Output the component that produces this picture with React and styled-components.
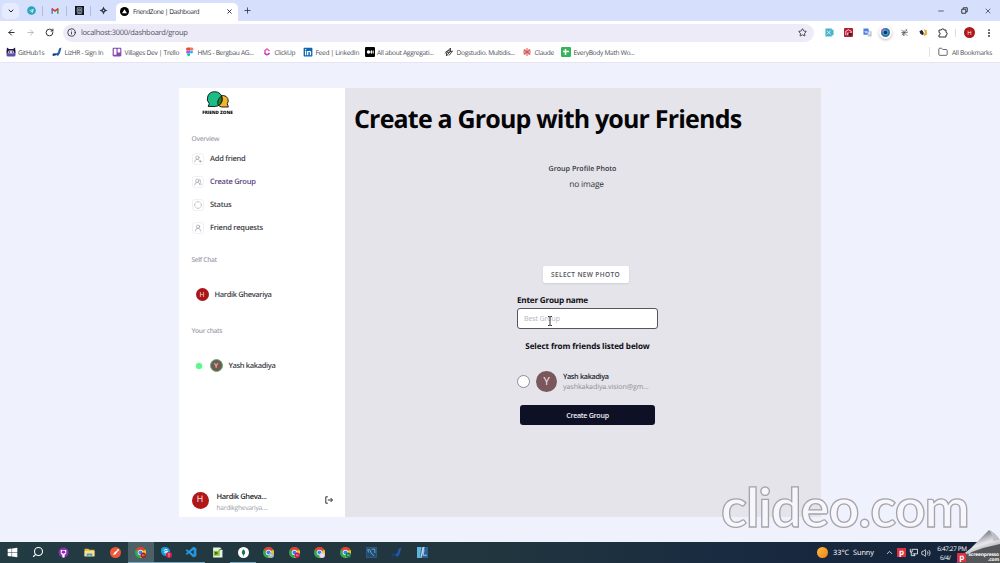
import React from 'react';
import styled, { createGlobalStyle } from 'styled-components';
import {
  ArrowLeft,
  ArrowRight,
  RotateCw,
  Info,
  Star,
  EllipsisVertical,
  Folder,
  ChevronDown,
  ChevronUp,
  Minus,
  Plus,
  X,
  UserRoundPlus,
  UsersRound,
  UserRound,
  CircleDashed,
  Search,
  Volume2,
} from 'lucide-react';
import { FaLinkedin, FaTrello, FaTelegram, FaWindows } from 'react-icons/fa';
import { VscVscode } from 'react-icons/vsc';

const bookmarks = [
  { icon: 'github1s', text: 'GitHub1s', width: 46.5 },
  { icon: 'lizhr', text: 'LizHR - Sign In', width: 60 },
  { icon: 'trello', text: 'Villages Dev | Trello', width: 73 },
  { icon: 'figma', text: 'HMS - Bergbau AG...', width: 77 },
  { icon: 'clickup', text: 'ClickUp', width: 41 },
  { icon: 'linkedin', text: 'Feed | LinkedIn', width: 61.5 },
  { icon: 'medium', text: 'All about Aggregati...', width: 79.5 },
  { icon: 'dog', text: 'Dogstudio. Multidis...', width: 78 },
  { icon: 'claude', text: 'Claude', width: 39 },
  { icon: 'sheet', text: 'EveryBody Math Wo...', width: 80 },
];

const menu = [
  { text: 'Add friend', Icon: UserRoundPlus },
  { text: 'Create Group', Icon: UsersRound, active: true },
  { text: 'Status', Icon: CircleDashed },
  { text: 'Friend requests', Icon: UserRound },
];

const tasks = [
  { icon: 'windows' },
  { icon: 'search' },
  { icon: 'github' },
  { icon: 'explorer' },
  { icon: 'postman' },
  { icon: 'chrome', badge: '#a51d1b', active: true, open: true },
  { icon: 'skype', open: true },
  { icon: 'vscode', open: true },
  { icon: 'notepad' },
  { icon: 'mongo', open: true },
  { icon: 'chrome', badge: '#9db7c4' },
  { icon: 'chrome', badge: '#c2185b' },
  { icon: 'chrome', badge: '#e3d5f2' },
  { icon: 'chrome', badge: '#0b7a4b' },
  { icon: 'workbench' },
  { icon: 'lizhr' },
  { icon: 'sketch' },
];

const Glyph = ({ name, badge }) => {
  switch (name) {
    case 'github1s':
      return (
        <Svg viewBox='0 0 20 20'>
          <path d='M2 1l4 3h8l4-3 1 7v4H1V8z' fill='#1d1850' />
          <path d='M1 11h18v5q0 3-3 3H4q-3 0-3-3z' fill='#5a4fb0' />
          <rect x='4' y='7' width='12' height='6' rx='3' fill='#f3d3c4' />
          <circle cx='7' cy='10' r='1.4' fill='#1d1850' />
          <circle cx='13' cy='10' r='1.4' fill='#1d1850' />
        </Svg>
      );
    case 'lizhr':
      return (
        <Svg viewBox='0 0 20 20'>
          <path d='M19 1l-3 11-4 6-4-3-7 2 1-4 6 0 4-2 2-8z' fill='#2458ad' />
          <path d='M1 14l6-1 3 3-8 2z' fill='#123a7d' />
        </Svg>
      );
    case 'trello':
      return <FaTrello size={10} color='#8a48b5' />;
    case 'linkedin':
      return <FaLinkedin size={10} color='#0a66b2' />;
    case 'figma':
      return (
        <Svg viewBox='0 0 20 20'>
          <path d='M5 1h5v6H5a3 3 0 0 1 0-6z' fill='#f24e1e' />
          <path d='M10 1h4a3 3 0 0 1 0 6h-4z' fill='#ff7262' />
          <path d='M5 7h5v6H5a3 3 0 0 1 0-6z' fill='#a259ff' />
          <circle cx='13' cy='10' r='3' fill='#1abcfe' />
          <path d='M5 13h5v3a3 3 0 1 1-5-3z' fill='#0acf83' />
        </Svg>
      );
    case 'clickup':
      return (
        <Svg viewBox='0 0 20 20' fill='none' strokeWidth='3'>
          <path d='M5 8l5-4 5 4' stroke='#e75aa9' />
          <path d='M5 12q5 7 10 0' stroke='#b03cd8' />
          <path d='M6 7v6' stroke='#ee5aa0' />
        </Svg>
      );
    case 'medium':
      return (
        <Svg viewBox='0 0 20 20'>
          <rect width='20' height='20' rx='2' fill='#050505' />
          <circle cx='7' cy='10' r='3.4' fill='#fff' />
          <ellipse cx='13' cy='10' rx='2' ry='3.3' fill='#fff' />
          <rect x='16' y='7' width='1.4' height='6' fill='#fff' />
        </Svg>
      );
    case 'dog':
      return (
        <Svg viewBox='0 0 20 20' fill='none' stroke='#333' strokeWidth='1.8'>
          <path d='M2 13L13 2v6L5 18v-6l12-4-7 9M3 10l9-4' />
        </Svg>
      );
    case 'claude':
      return (
        <Svg viewBox='0 0 20 20' stroke='#d3574f' strokeWidth='2'>
          <path d='M10 2v16M2 10h16M5 4l10 12M15 4L5 16M3 6l14 8M17 6L3 14' />
        </Svg>
      );
    case 'sheet':
      return (
        <Svg viewBox='0 0 20 20'>
          <rect width='20' height='20' rx='2' fill='#35b558' />
          <path d='M9 4v12M4 9h12' stroke='#fff' strokeWidth='3' />
        </Svg>
      );
    case 'windows':
      return <FaWindows size={9} color='#fff' />;
    case 'search':
      return <MirroredSearch size={12} color='#fff' strokeWidth={2.2} />;
    case 'github':
      return (
        <Svg viewBox='0 0 20 20'>
          <circle cx='10' cy='10' r='9' fill='#8b2fb0' />
          <path d='M5 5l3 1h4l3-1v6q-1 3-3 3v5H8v-5q-3 0-3-3z' fill='#fff' />
          <ellipse cx='10' cy='9.5' rx='3.4' ry='2.6' fill='#8b2fb0' />
        </Svg>
      );
    case 'explorer':
      return (
        <Svg viewBox='0 0 20 20'>
          <path d='M1 3h7l2 2h9v12H1z' fill='#e7b94a' />
          <path d='M1 7h18v10H1z' fill='#fbe08a' />
          <path d='M5 17v-5h10v5h-3v-2H8v2z' fill='#4a9ad0' />
        </Svg>
      );
    case 'postman':
      return (
        <Svg viewBox='0 0 20 20'>
          <circle cx='10' cy='10' r='10' fill='#f1583a' />
          <path d='M5 15l3-5 5-4 2 1-5 6z' fill='#fff' />
          <circle cx='14.5' cy='5.5' r='1.8' fill='#fff' />
        </Svg>
      );
    case 'skype':
      return (
        <Svg viewBox='0 0 20 20'>
          <circle cx='6' cy='6' r='6' fill='#1b9de0' />
          <circle cx='8.5' cy='8.5' r='8' fill='#18a0dc' />
          <path d='M12 5q-6-2-6 1t6 2q1 4-6 2' fill='none' stroke='#fff' strokeWidth='1.8' />
          <circle cx='14.5' cy='14.5' r='5.5' fill='#d21f4d' />
          <path d='M14.5 11.5v4M14.5 16.5v1.4' stroke='#fff' strokeWidth='1.4' />
        </Svg>
      );
    case 'vscode':
      return <VscVscode size={13} color='#2596e0' />;
    case 'notepad':
      return (
        <Svg viewBox='0 0 20 20'>
          <path d='M2 1h13l4 5v13H2z' fill='#e8f3dd' />
          <path d='M3 7h11v9H3z' fill='#8cc63f' />
          <path d='M6 14V9l3 4V9M12 6l6-2' stroke='#33521a' strokeWidth='1.6' fill='none' />
        </Svg>
      );
    case 'mongo':
      return (
        <Svg viewBox='0 0 20 20'>
          <circle cx='10' cy='10' r='10' fill='#fff' />
          <path d='M10 4q6 6 0 11q-6-5 0-11z' fill='#10754a' />
          <path d='M10 13v4' stroke='#10754a' />
        </Svg>
      );
    case 'workbench':
      return (
        <Svg viewBox='0 0 20 20' fill='none' stroke='#7fb2d6' strokeWidth='1.5'>
          <rect x='1' y='1' width='18' height='18' fill='#214b72' stroke='#315f88' />
          <path d='M3 5h4l3 7 5 4M10 4h6v7M3 5l2 5' />
        </Svg>
      );
    case 'sketch':
      return (
        <Svg viewBox='0 0 20 20'>
          <rect width='20' height='20' fill='#2a5f98' />
          <path d='M0 0h8L5 20H0z' fill='#5fb6dc' />
          <path d='M10 0h4L8 20H6z' fill='#b7d9e8' />
          <path d='M13 5l-2 10h7' fill='none' stroke='#c4d7e6' strokeWidth='1.5' />
        </Svg>
      );
    case 'chrome':
      return (
        <Svg viewBox='0 0 20 20'>
          <circle cx='10' cy='10' r='10' fill='#31a952' />
          <path d='M10 10L1.3 5A10 10 0 0 1 18.7 5z' fill='#e6402f' />
          <path d='M10 10l8.7-5A10 10 0 0 1 10 20z' fill='#fbc116' />
          <circle cx='10' cy='10' r='5' fill='#fff' />
          <circle cx='10' cy='10' r='3.8' fill='#3d83ec' />
          <circle cx='15' cy='15' r='4.8' fill={badge} />
          <path d='M13.5 13v4M16.5 13v4M13.5 15h3' stroke='#ffffff99' />
        </Svg>
      );
    default:
      return null;
  }
};

const Logo = () => (
  <LogoSvg viewBox='0 0 44 36'>
    <path
      d='M32 8a9.5 9.5 0 0 1 7 15l2 6H29a10.5 10.5 0 0 1 3-21z'
      fill='#f4b42b'
      stroke='#17201c'
      strokeWidth='1.8'
    />
    <path
      d='M16 1a13 13 0 0 1 1 27H4l2-5A13 13 0 0 1 16 1z'
      fill='#19bd85'
      stroke='#17201c'
      strokeWidth='1.8'
    />
    <path d='M28 9q4 10-5 18-5-9 5-18z' fill='#238319' stroke='#17201c' strokeWidth='1.8' />
  </LogoSvg>
);

const Browser = () => (
  <>
    <TabStrip>
      <TabSearch>
        <ChevronDown size={8} strokeWidth={3} />
      </TabSearch>
      <PinnedTab>
        <FaTelegram size={9} color='#25a9b8' />
      </PinnedTab>
      <PinnedTab>
        <Svg viewBox='0 0 20 20' $size={8} fill='none' strokeWidth='4'>
          <path d='M3 17V4' stroke='#4285f4' />
          <path d='M17 4v13' stroke='#39a852' />
          <path d='M2 4l8 6 8-6' stroke='#e23b34' />
        </Svg>
      </PinnedTab>
      <PinnedTab>
        <Svg viewBox='0 0 20 20' $size={9}>
          <rect width='20' height='20' fill='#111722' />
          <path d='M5 4h10v10H5zM5 17h10M8 7h4v4H8z' fill='none' stroke='#c5d0df' strokeWidth='1.5' />
        </Svg>
      </PinnedTab>
      <PinnedTab $last>
        <Svg viewBox='0 0 20 20' $size={9}>
          <path d='M10 1l3 6 6 3-6 3-3 6-3-6-6-3 6-3z' fill='#303846' />
          <circle cx='10' cy='10' r='1.5' fill='#d7dfff' />
        </Svg>
      </PinnedTab>
      <ActiveTab>
        <Svg viewBox='0 0 20 20' $size={9}>
          <circle cx='10' cy='10' r='10' fill='#000' />
          <path d='M10 5l5.5 9h-11z' fill='#fff' />
        </Svg>
        <TabTitle>FriendZone | Dashboard</TabTitle>
        <X size={7} strokeWidth={3} />
      </ActiveTab>
      <Plus size={9} strokeWidth={2} />
      <WindowButtons>
        <Minus size={8} />
        <Svg viewBox='0 0 14 14' $size={7} fill='none' stroke='#24252b' strokeWidth='1.8'>
          <path d='M1.5 4.5h8v8h-8zM4.5 4V1.5h8v8H10' />
        </Svg>
        <X size={8} />
      </WindowButtons>
    </TabStrip>
    <Toolbar>
      <NavButtons>
        <ArrowLeft size={9} strokeWidth={2.5} />
        <ArrowRight size={9} color='#a8a8ae' />
        <RotateCw size={9} strokeWidth={2.5} />
      </NavButtons>
      <AddressBar>
        <Info size={9} strokeWidth={2.2} />
        <Url>localhost:3000/dashboard/group</Url>
        <Star size={9} strokeWidth={2.2} />
      </AddressBar>
      <Extensions>
        <Svg viewBox='0 0 20 20' $size={9}>
          <path d='M1 1h14v3h4v12h-4v3H1z' fill='#45b4cc' />
          <path d='M4 14l9-8M4 6l9 8' stroke='#d8f2f7' strokeWidth='2' />
        </Svg>
        <Svg viewBox='0 0 20 20' $size={9}>
          <rect width='20' height='20' rx='2' fill='#b61d32' />
          <path d='M4 16V7q6-6 12 0v4H8v5' stroke='#f5dce0' strokeWidth='2' fill='none' />
          <path d='M10 9l9 5-4 1-2 4z' fill='#301016' />
        </Svg>
        <Svg viewBox='0 0 20 20' $size={9}>
          <path d='M1 1h11l3 14H1z' fill='#4c80e6' />
          <path d='M9 7h10v12h-8z' fill='#b9c2d4' />
          <path d='M4 8h5M4 8q1 4 5 2M12 11h5M15 10q0 4-3 6' stroke='#fff' strokeWidth='1.5' fill='none' />
        </Svg>
        <Lens>
          <Svg viewBox='0 0 20 20' $size={9}>
            <circle cx='10' cy='10' r='10' fill='#3b6fa8' />
            <path d='M10 0A10 10 0 0 0 0 10h7z' fill='#a06bb5' />
            <circle cx='10' cy='10' r='6' fill='#25b7d3' />
            <circle cx='10' cy='10' r='4' fill='#132f5a' />
          </Svg>
        </Lens>
        <Svg viewBox='0 0 20 20' $size={9} stroke='#4d4d55' strokeWidth='1.5' fill='none'>
          <path d='M3 4l13 13M15 4L4 16M9 5v12M3 10h14M13 2l3 6M6 12l3 6' />
        </Svg>
        <Svg viewBox='0 0 20 20' $size={9}>
          <path d='M1 7l6-3 4 7-3 5-5-3z' fill='#1e2a4c' />
          <path d='M11 3l6 2 1 9-6 4-3-3 4-5z' fill='#eda429' />
          <path d='M8 4l5 8' stroke='#fff' strokeWidth='2' />
        </Svg>
        <Svg viewBox='0 0 20 20' $size={10} fill='none' stroke='#303138' strokeWidth='2'>
          <path d='M2 4h5a2.5 2.5 0 0 1 5 0h4v5a2.5 2.5 0 0 1 0 5v4H2v-4a2.5 2.5 0 0 0 0-5z' />
        </Svg>
      </Extensions>
      <Separator />
      <Profile>H</Profile>
      <EllipsisVertical size={10} strokeWidth={2.5} />
    </Toolbar>
    <BookmarkBar>
      {bookmarks.map((item) => (
        <Bookmark key={item.text} $width={item.width}>
          <Glyph name={item.icon} />
          {item.text}
        </Bookmark>
      ))}
      <AllBookmarks>
        <Folder size={10} />
        All Bookmarks
      </AllBookmarks>
    </BookmarkBar>
  </>
);

const Sidebar = () => (
  <SidebarContainer>
    <Brand>
      <Logo />
      <BrandName>FRIEND ZONE</BrandName>
    </Brand>
    <SectionTitle>Overview</SectionTitle>
    <Menu>
      {menu.map(({ text, Icon, active }) => (
        <MenuItem key={text} $active={active}>
          <MenuIcon>
            <Icon size={8} strokeWidth={1.8} />
          </MenuIcon>
          <ItemText>{text}</ItemText>
        </MenuItem>
      ))}
    </Menu>
    <SectionTitle>Self Chat</SectionTitle>
    <Chat $self>
      <Avatar $size={13} $color='#a91518'>
        H
      </Avatar>
      <ItemText>Hardik Ghevariya</ItemText>
    </Chat>
    <SectionTitle>Your chats</SectionTitle>
    <Chat>
      <OnlineDot />
      <Avatar $size={13} $color='#79574f' $ring>
        Y
      </Avatar>
      <ItemText>Yash kakadiya</ItemText>
    </Chat>
    <Account>
      <Avatar $size={17} $color='#b01719'>
        H
      </Avatar>
      <AccountText>
        <PersonName>Hardik Gheva...</PersonName>
        <PersonMail>hardikghevariya....</PersonMail>
      </AccountText>
      <Svg viewBox='0 0 20 20' $size={8} fill='none' stroke='#24242b' strokeWidth='2.4'>
        <path d='M7 2H2v16h5M7 10h11M14 5l5 5-5 5' />
      </Svg>
    </Account>
  </SidebarContainer>
);

const GroupForm = () => (
  <Main>
    <Title>Create a Group with your Friends</Title>
    <Form>
      <PhotoLabel>Group Profile Photo</PhotoLabel>
      <NoImage>no image</NoImage>
      <PhotoButton>SELECT NEW PHOTO</PhotoButton>
      <NameLabel>Enter Group name</NameLabel>
      <NameField>
        <NameInput placeholder='Best Group' />
        <Cursor viewBox='0 0 6 10' fill='none' stroke='#333'>
          <path d='M1 .5h1.5l.5.5.5-.5H5M3 1v8M1 9.5h1.5L3 9l.5.5H5' />
        </Cursor>
      </NameField>
      <FriendsLabel>Select from friends listed below</FriendsLabel>
      <Friend>
        <Radio />
        <Avatar $size={21} $color='#79575a'>
          Y
        </Avatar>
        <FriendText>
          <FriendName>Yash kakadiya</FriendName>
          <FriendMail>yashkakadiya.vision@gm...</FriendMail>
        </FriendText>
      </Friend>
      <Submit>Create Group</Submit>
    </Form>
  </Main>
);

const Taskbar = () => (
  <TaskbarContainer>
    {tasks.map((task, index) => (
      <Task key={index} $active={task.active} $open={task.open}>
        <Glyph name={task.icon} badge={task.badge} />
      </Task>
    ))}
    <Tray>
      <Sun />
      <Weather>33°C&nbsp; Sunny</Weather>
      <ChevronUp size={9} />
      <TrayBadge>p</TrayBadge>
      <Svg viewBox='0 0 20 20' $size={9} fill='none' stroke='#fff' strokeWidth='1.8'>
        <path d='M6 3h13v10H8M3 2v7h4V4M5 9v8h9M12 13v4' />
      </Svg>
      <Volume2 size={10} strokeWidth={1.8} />
      <Clock>
        <span>6:47:27 PM</span>
        <ClockDate>6/4/</ClockDate>
      </Clock>
    </Tray>
  </TaskbarContainer>
);

const App = () => (
  <Screen>
    <GlobalStyle />
    <Browser />
    <Page>
      <Card>
        <Sidebar />
        <GroupForm />
      </Card>
    </Page>
    <Taskbar />
    <Watermark>clideo.com</Watermark>
    <Corner>
      <CornerSvg viewBox='0 0 64 36'>
        <defs>
          <linearGradient id='curl' x1='0.3' y1='0.2' x2='0.7' y2='1'>
            <stop offset='0.1' stopColor='#8c8d94' />
            <stop offset='0.45' stopColor='#e9e9ed' />
            <stop offset='0.9' stopColor='#85868c' />
          </linearGradient>
        </defs>
        <path d='M20 36L32 25l32-9v20z' fill='#55565a' />
        <path d='M21 31Q33 24 39 17L53 3q6 3 11 10v4Q48 20 33 26z' fill='url(#curl)' />
        <path d='M53 3q7 3 11 10l-7 1q0-7-4-11z' fill='#bfc0c6' />
      </CornerSvg>
      <CornerLabel>
        <TrayBadge>p</TrayBadge>
        <CornerName>
          Screenpresso
          <span>.com</span>
        </CornerName>
      </CornerLabel>
    </Corner>
  </Screen>
);

export default App;

const GlobalStyle = createGlobalStyle`
  * {
    box-sizing: border-box;
  }
  body {
    margin: 0;
    overflow: hidden;
    font-family: 'Open Sans', 'Noto Sans', sans-serif;
    text-rendering: geometricPrecision;
  }
  svg {
    flex-shrink: 0;
  }
`;

const Screen = styled.div`
  position: relative;
  display: flex;
  flex-direction: column;
  width: 1000px;
  height: 563px;
  overflow: hidden;
  color: #24252b;
`;

const Svg = styled.svg`
  width: ${(props) => props.$size || 10}px;
  height: ${(props) => props.$size || 10}px;
`;

const MirroredSearch = styled(Search)`
  transform: scaleX(-1);
`;

const TabStrip = styled.div`
  display: flex;
  align-items: center;
  height: 21px;
  background: #d6dffb;
`;

const TabSearch = styled.div`
  display: flex;
  align-items: center;
  justify-content: center;
  width: 17px;
  height: 16px;
  margin: 0 0 0 2px;
  border-radius: 5px;
  background: #e6ecfd;
`;

const PinnedTab = styled.div`
  display: flex;
  align-items: center;
  justify-content: center;
  width: 24px;
  height: 10px;
  margin-right: ${(props) => (props.$last ? '1px' : '0')};
  padding-left: 1px;
  border-right: 1px solid ${(props) => (props.$last ? 'transparent' : '#b3bedb')};
`;

const ActiveTab = styled.div`
  display: flex;
  align-items: center;
  align-self: flex-end;
  width: 122px;
  height: 18px;
  margin-right: 5px;
  padding: 0 5px 2px 4px;
  border-radius: 5px 5px 0 0;
  background: #fff;
`;

const TabTitle = styled.span`
  flex: 1;
  margin-left: 4px;
  font-size: 6.6px;
  letter-spacing: -0.45px;
  white-space: nowrap;
`;

const WindowButtons = styled.div`
  display: flex;
  align-items: center;
  gap: 16px;
  margin: 0 8px 0 auto;
`;

const Toolbar = styled.div`
  display: flex;
  align-items: center;
  height: 23px;
  background: #fff;
`;

const NavButtons = styled.div`
  display: flex;
  gap: 10px;
  width: 63px;
  padding-left: 7px;
`;

const AddressBar = styled.div`
  display: flex;
  align-items: center;
  width: 751px;
  height: 18px;
  padding: 0 7px 0 4px;
  border-radius: 9px;
  background: #eeebf8;
`;

const Url = styled.span`
  flex: 1;
  margin-left: 5px;
  padding-top: 1px;
  font-size: 7.5px;
  letter-spacing: -0.27px;
  color: #505158;
`;

const Extensions = styled.div`
  display: flex;
  align-items: center;
  justify-content: space-between;
  width: 123px;
  margin-left: 11px;
`;

const Lens = styled.div`
  display: flex;
  border-radius: 50%;
  box-shadow: 0 0 0 2px #fff, 0 1px 3px 2px #bbb;
`;

const Separator = styled.div`
  width: 1px;
  height: 8px;
  margin-left: 7px;
  background: #dcdce8;
`;

const Profile = styled.div`
  display: flex;
  align-items: center;
  justify-content: center;
  width: 11px;
  height: 11px;
  margin: 0 9px 0 8px;
  border-radius: 50%;
  background: #b01717;
  color: #fff;
  font-size: 6px;
`;

const BookmarkBar = styled.div`
  display: flex;
  align-items: center;
  height: 19px;
  padding: 0 0 2px 5.5px;
  border-bottom: 1px solid #e4e4f3;
  background: #fff;
  font-size: 6.6px;
  letter-spacing: -0.3px;
  color: #4a4b52;
`;

const Bookmark = styled.div`
  display: flex;
  align-items: center;
  gap: 2.5px;
  width: ${(props) => props.$width}px;
  white-space: nowrap;
`;

const AllBookmarks = styled.div`
  display: flex;
  align-items: center;
  gap: 4px;
  margin: 0 8px 0 auto;
  padding-left: 8px;
  border-left: 1px solid #e2e2ea;
  white-space: nowrap;
`;

const Page = styled.div`
  display: flex;
  justify-content: center;
  flex: 1;
  padding: 25px 0;
  background: #eff1fd;
`;

const Card = styled.div`
  display: flex;
  width: 642px;
  height: 429px;
`;

const SidebarContainer = styled.div`
  display: flex;
  flex-direction: column;
  width: 166px;
  padding: 0 12px 6px 12.5px;
  background: #fff;
`;

const Brand = styled.div`
  display: flex;
  flex-direction: column;
  align-items: center;
  width: 52px;
  height: 46px;
  padding-top: 3px;
`;

const LogoSvg = styled.svg`
  width: 24px;
  height: 20px;
`;

const BrandName = styled.div`
  font-size: 4.6px;
  font-weight: 800;
  line-height: 5px;
  letter-spacing: -0.05px;
  white-space: nowrap;
  color: #111;
`;

const SectionTitle = styled.div`
  font-size: 6.7px;
  font-weight: 600;
  line-height: 10px;
  letter-spacing: -0.35px;
  color: #a0a1ab;
`;

const Menu = styled.div`
  display: flex;
  flex-direction: column;
  margin: 3px 0 16px;
`;

const MenuItem = styled.div`
  display: flex;
  align-items: center;
  gap: 6.5px;
  height: 23px;
  font-size: 7.5px;
  font-weight: 600;
  letter-spacing: -0.25px;
  color: ${(props) => (props.$active ? '#5b3f83' : '#3c3d45')};
`;

const ItemText = styled.span`
  padding-top: 1.5px;
`;

const MenuIcon = styled.div`
  display: flex;
  align-items: center;
  justify-content: center;
  width: 12px;
  height: 12px;
  border: 1px solid #f1f1f5;
  border-radius: 3px;
  color: #8f909a;
`;

const Chat = styled.div`
  display: flex;
  align-items: center;
  gap: 6px;
  height: 13px;
  margin: ${(props) => (props.$self ? '23px 0 25px' : '23px 0 0')};
  padding-left: ${(props) => (props.$self ? '4px' : '3px')};
  font-size: 7.5px;
  font-weight: 600;
  letter-spacing: -0.36px;
  color: #3c3d45;
`;

const Avatar = styled.div`
  display: flex;
  align-items: center;
  justify-content: center;
  flex-shrink: 0;
  width: ${(props) => props.$size}px;
  height: ${(props) => props.$size}px;
  border: ${(props) => (props.$ring ? '1.5px solid #55b67e' : 'none')};
  border-radius: 50%;
  background: ${(props) => props.$color};
  color: #f2dede;
  font-family: Roboto, sans-serif;
  font-size: ${(props) => props.$size * 0.53}px;
  font-weight: 400;
  letter-spacing: 0;
`;

const OnlineDot = styled.div`
  width: 6px;
  height: 6px;
  margin: 0 2px 0 1px;
  border-radius: 50%;
  background: #5cf58e;
  box-shadow: 0 0 2px #8dffb0;
`;

const Account = styled.div`
  display: flex;
  align-items: center;
  gap: 8px;
  height: 22px;
  margin-top: auto;
`;

const AccountText = styled.div`
  flex: 1;
  padding-top: 3px;
`;

const PersonName = styled.div`
  font-size: 7.5px;
  font-weight: 600;
  line-height: 11px;
  letter-spacing: -0.36px;
`;

const PersonMail = styled.div`
  font-size: 6.5px;
  line-height: 9px;
  letter-spacing: -0.2px;
  color: #95959f;
`;

const Main = styled.div`
  flex: 1;
  padding-left: 9px;
  background: #e5e4ea;
`;

const Title = styled.h1`
  margin: 0;
  padding-top: 13px;
  font-size: 25px;
  font-weight: 700;
  line-height: 36px;
  letter-spacing: -0.82px;
  white-space: nowrap;
  color: #050508;
`;

const Form = styled.div`
  display: flex;
  flex-direction: column;
  align-items: center;
  width: 141px;
  margin: 26px 0 0 163px;
`;

const PhotoLabel = styled.div`
  margin-left: -10px;
  font-size: 7.1px;
  font-weight: 600;
  line-height: 12px;
  color: #34353b;
`;

const NoImage = styled.div`
  height: 91px;
  margin-left: -2px;
  padding-top: 3px;
  font-size: 8.4px;
  line-height: 13px;
  letter-spacing: -0.2px;
  color: #34353b;
`;

const PhotoButton = styled.button`
  width: 86px;
  height: 17px;
  margin-right: 4px;
  padding: 0;
  border: none;
  border-radius: 2px;
  background: #fff;
  box-shadow: 0 1px 2px #cfcfd6;
  font-family: inherit;
  font-size: 6.5px;
  font-weight: 600;
  letter-spacing: 0.35px;
  white-space: nowrap;
  color: #51525a;
`;

const NameLabel = styled.label`
  align-self: flex-start;
  margin: 12px 0 1px;
  font-size: 8.2px;
  font-weight: 700;
  line-height: 12px;
  letter-spacing: -0.24px;
  color: #0d0d12;
`;

const NameField = styled.div`
  position: relative;
  width: 100%;
  height: 21px;
`;

const NameInput = styled.input`
  display: block;
  width: 100%;
  height: 100%;
  padding: 0 6px;
  border: 1px solid #54555f;
  border-radius: 3px;
  outline: none;
  background: #fff;
  font-family: inherit;
  font-size: 7px;
  letter-spacing: -0.1px;
  &::placeholder {
    color: #b5b6bf;
  }
`;

const Cursor = styled.svg`
  position: absolute;
  top: 8px;
  left: 30px;
  width: 6px;
  height: 10px;
`;

const FriendsLabel = styled.div`
  margin-top: 12px;
  font-size: 8.1px;
  font-weight: 700;
  line-height: 12px;
  letter-spacing: -0.1px;
  white-space: nowrap;
  color: #0d0d12;
`;

const Friend = styled.div`
  display: flex;
  align-items: center;
  gap: 6px;
  width: 100%;
  height: 22px;
  margin-top: 17px;
`;

const Radio = styled.div`
  flex-shrink: 0;
  width: 13px;
  height: 13px;
  border: 1px solid #8d8d96;
  border-radius: 50%;
  background: #fff;
`;

const FriendText = styled.div`
  padding-top: 2px;
`;

const FriendName = styled.div`
  font-size: 7.3px;
  font-weight: 600;
  line-height: 10px;
  letter-spacing: -0.34px;
`;

const FriendMail = styled.div`
  font-size: 7.1px;
  line-height: 11px;
  letter-spacing: -0.08px;
  white-space: nowrap;
  color: #8d8e98;
`;

const Submit = styled.button`
  width: 135px;
  height: 20px;
  margin-top: 13px;
  padding: 0;
  border: none;
  border-radius: 3px;
  background: #0e1025;
  color: #eeeef5;
  font-family: inherit;
  font-size: 7.1px;
  font-weight: 600;
  letter-spacing: -0.28px;
`;

const TaskbarContainer = styled.div`
  display: flex;
  height: 21px;
  background: linear-gradient(90deg, #233b42 0%, #21353f 50%, #182a40 75%, #14233a 100%);
  color: #fff;
`;

const Task = styled.div`
  display: flex;
  align-items: center;
  justify-content: center;
  width: 25.6px;
  border-bottom: 1.5px solid ${(props) => (props.$open ? '#7aa9c4' : 'transparent')};
  background: ${(props) => (props.$active ? '#4b6067' : 'none')};
  background-clip: padding-box;
  > svg {
    min-width: 11px;
    min-height: 11px;
  }
`;

const Tray = styled.div`
  display: flex;
  align-items: center;
  gap: 3px;
  margin-left: auto;
  padding-right: 33px;
`;

const Sun = styled.div`
  width: 11px;
  height: 11px;
  border-radius: 50%;
  background: linear-gradient(135deg, #ffc13a, #ee7f20);
`;

const Weather = styled.div`
  margin: 0 8px 0 2px;
  font-size: 7.3px;
  white-space: nowrap;
`;

const TrayBadge = styled.div`
  display: flex;
  align-items: center;
  justify-content: center;
  width: 9px;
  height: 9px;
  background: #e1303d;
  color: #fff;
  font-size: 8px;
  font-weight: 700;
  line-height: 7px;
  padding-bottom: 1px;
`;

const Clock = styled.div`
  display: flex;
  flex-direction: column;
  align-items: center;
  width: 30px;
  margin-left: 3px;
  font-size: 6.4px;
  line-height: 9px;
  letter-spacing: -0.35px;
  white-space: nowrap;
`;

const ClockDate = styled.span`
  align-self: flex-start;
  margin-left: 3px;
`;

const Watermark = styled.div`
  position: absolute;
  top: 469px;
  left: 721px;
  font-family: Lato, sans-serif;
  font-size: 54px;
  font-weight: 700;
  line-height: 76px;
  letter-spacing: -1.05px;
  color: #f6f6fc;
  -webkit-text-stroke: 1.3px #a4a4aa;
`;

const Corner = styled.div`
  position: absolute;
  right: 0;
  bottom: 0;
  width: 64px;
  height: 36px;
`;

const CornerSvg = styled.svg`
  display: block;
  width: 64px;
  height: 36px;
`;

const CornerLabel = styled.div`
  position: absolute;
  right: 1px;
  bottom: 1px;
  display: flex;
  align-items: center;
  gap: 2px;
`;

const CornerName = styled.div`
  display: flex;
  flex-direction: column;
  align-items: flex-end;
  font-size: 4.8px;
  font-weight: 700;
  line-height: 4.5px;
  letter-spacing: -0.1px;
  color: #fff;
`;
